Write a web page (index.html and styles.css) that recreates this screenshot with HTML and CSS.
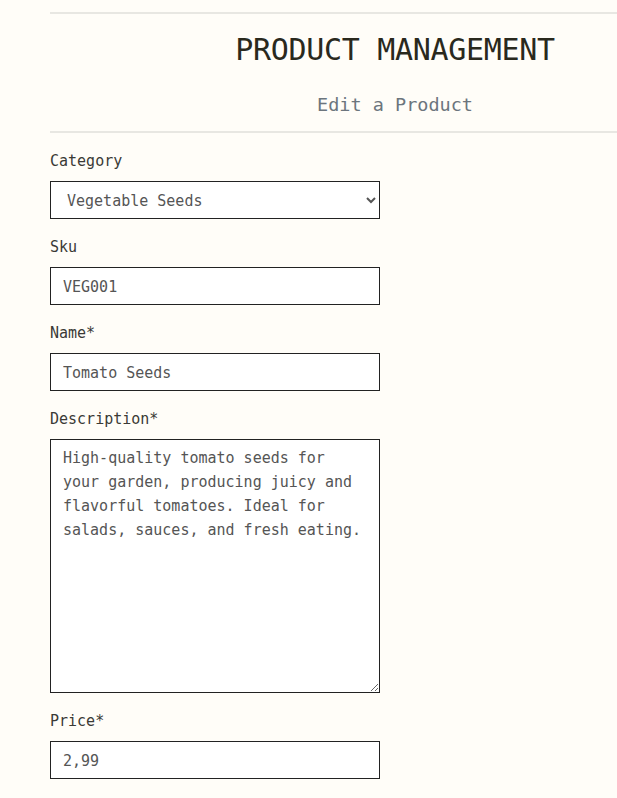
FILE: index.html
```html
<!DOCTYPE html>
<html lang="en">
<head>
<meta charset="utf-8">
<title>Product Management</title>
<link rel="stylesheet" href="styles.css">
</head>
<body>
<div class="container">
  <hr class="rule">
  <header class="page-head">
    <h1 class="title">PRODUCT MANAGEMENT</h1>
    <h2 class="subtitle">Edit a Product</h2>
  </header>
  <hr class="rule">
  <form class="form">
    <div class="field">
      <label class="label" for="category">Category</label>
      <select class="control select" id="category">
        <option>Vegetable Seeds</option>
      </select>
    </div>
    <div class="field">
      <label class="label" for="sku">Sku</label>
      <input class="control" id="sku" type="text" value="VEG001">
    </div>
    <div class="field">
      <label class="label" for="name">Name*</label>
      <input class="control" id="name" type="text" value="Tomato Seeds">
    </div>
    <div class="field">
      <label class="label" for="desc">Description*</label>
      <textarea class="control textarea" id="desc">High-quality tomato seeds for your garden, producing juicy and flavorful tomatoes. Ideal for salads, sauces, and fresh eating.</textarea>
    </div>
    <div class="field">
      <label class="label" for="price">Price*</label>
      <input class="control" id="price" type="text" value="2,99">
    </div>
  </form>
</div>
</body>
</html>
```

FILE: styles.css
```css
html, body {
  margin: 0;
  padding: 0;
  background: #fffdf8;
  overflow-x: hidden;
}

body {
  font-family: "DejaVu Sans Mono", "Liberation Mono", monospace;
  color: #2c2b22;
}

.container {
  margin-left: 50px;
  padding-top: 12px;
}

.rule {
  margin: 0;
  border: 0;
  border-top: 2px solid #e8e7e2;
}

.page-head {
  text-align: center;
  padding: 16px 0 11px 123px;
}

.title {
  margin: 0;
  font-size: 30px;
  font-weight: normal;
  line-height: 40px;
  color: #2a291d;
  letter-spacing: -0.3px;
}

.subtitle {
  margin: 20px 0 0;
  font-size: 18.5px;
  font-weight: normal;
  line-height: 30px;
  color: #6c757d;
}

.form {
  width: 330px;
  padding-top: 16px;
}

.field {
  display: flex;
  flex-direction: column;
  margin-bottom: 16px;
}

.label {
  font-size: 15px;
  line-height: 24px;
  color: #3a3a36;
  margin-bottom: 8px;
}

.control {
  box-sizing: border-box;
  width: 330px;
  height: 38px;
  border: 1px solid #222;
  border-radius: 0;
  background: #fff;
  font-family: "DejaVu Sans Mono", "Liberation Mono", monospace;
  font-size: 15px;
  color: #555;
  padding: 7px 12px 5px;
  margin: 0;
  outline: none;
}

.select {
  padding-left: 12px;
  padding-right: 6px;
}

.textarea {
  height: 254px;
  line-height: 24px;
  padding-top: 6px;
  resize: vertical;
}
```
